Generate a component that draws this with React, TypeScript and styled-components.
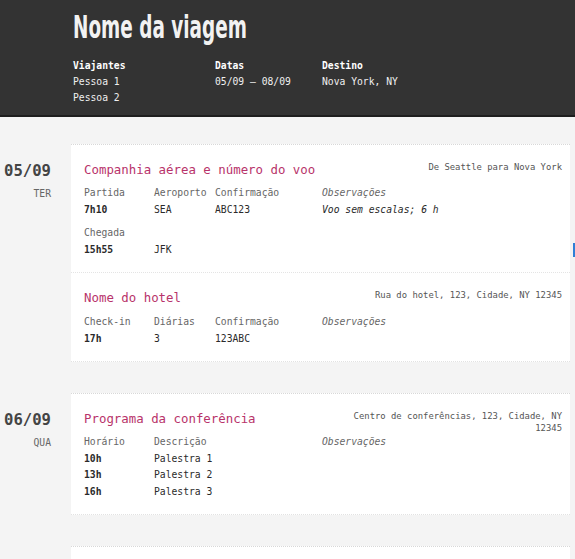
import React from "react";
import styled, { createGlobalStyle } from "styled-components";

const Global = createGlobalStyle`
  html, body { margin: 0; padding: 0; background: #f4f4f4; }
  body { font-family: "DejaVu Sans Mono", monospace; overflow: hidden; }
`;

const mono = `"DejaVu Sans Mono", "Liberation Mono", monospace`;

const Header = styled.header`
  background: #333333;
  border-bottom: 2px solid #1e1e1e;
  padding: 8px 0 13px 73px;
  height: 94px;
  color: #fff;
`;

const Title = styled.h1`
  margin: 0;
  font-family: "DejaVu Sans Condensed", "DejaVu Sans", sans-serif;
  font-weight: 700;
  font-size: 32px;
  line-height: 38px;
  color: #f2f2f2;
  display: inline-block;
  transform: scaleX(0.64);
  transform-origin: left center;
  white-space: nowrap;
`;

const Meta = styled.div`
  display: grid;
  grid-template-columns: 142px 107px auto;
  margin-top: 12px;
`;

const MetaCol = styled.div`
  display: flex;
  flex-direction: column;
  font-family: ${mono};
  font-size: 9.7px;
  line-height: 16px;
`;

const MetaLabel = styled.span`
  font-weight: 700;
  color: #fff;
`;

const MetaValue = styled.span`
  color: #f0f0f0;
`;

const Days = styled.main`
  display: flex;
  flex-direction: column;
  gap: 31px;
  padding-top: 27px;
`;

const Day = styled.section`
  display: grid;
  grid-template-columns: 71px 499px;
`;

const DateCol = styled.div`
  display: flex;
  flex-direction: column;
  align-items: flex-end;
  padding-right: 20px;
  padding-top: 17px;
  font-family: ${mono};
`;

const DateNum = styled.span`
  font-size: 15.6px;
  line-height: 20px;
  font-weight: 700;
  color: #444;
`;

const Weekday = styled.span`
  font-size: 9.7px;
  line-height: 20px;
  margin-top: 3px;
  color: #666;
`;

const Card = styled.div`
  background: #fff;
  border-top: 1px dotted #d8d8d8;
  border-bottom: 1px dotted #e2e2e2;
  display: flex;
  flex-direction: column;
`;

const Item = styled.div`
  padding: 16px 8px 14px 13px;
  & + & {
    border-top: 1px dotted #e4e4e4;
  }
`;

const ItemHead = styled.div`
  display: flex;
  justify-content: space-between;
  align-items: flex-start;
  gap: 12px;
`;

const ItemTitle = styled.h2`
  margin: 0;
  font-family: ${mono};
  font-weight: 400;
  font-size: 12.4px;
  line-height: 18px;
  color: #b8336a;
`;

const Address = styled.div`
  font-family: ${mono};
  font-size: 8.9px;
  line-height: 12px;
  color: #555;
  text-align: right;
  max-width: 215px;
`;

const Grid = styled.div<{ $gap?: number }>`
  display: grid;
  grid-template-columns: 70px 61px 107px 1fr;
  margin-top: ${(p) => p.$gap ?? 6}px;
  font-family: ${mono};
  font-size: 9.7px;
  line-height: 16.5px;
`;

const Label = styled.span<{ $note?: boolean }>`
  color: #666;
  font-style: ${(p) => (p.$note ? "italic" : "normal")};
`;

const Value = styled.span<{ $strong?: boolean; $note?: boolean }>`
  color: #2a2a2a;
  font-weight: ${(p) => (p.$strong ? 700 : 400)};
  font-style: ${(p) => (p.$note ? "italic" : "normal")};
`;

const Blank = styled.span``;

const ScrollMark = styled.div`
  position: fixed;
  right: 0;
  top: 243px;
  width: 2px;
  height: 14px;
  background: #2f7fd6;
`;

export default function App() {
  return (
    <>
      <Global />
      <Header>
        <Title>Nome da viagem</Title>
        <Meta>
          <MetaCol>
            <MetaLabel>Viajantes</MetaLabel>
            <MetaValue>Pessoa 1</MetaValue>
            <MetaValue>Pessoa 2</MetaValue>
          </MetaCol>
          <MetaCol>
            <MetaLabel>Datas</MetaLabel>
            <MetaValue>05/09 – 08/09</MetaValue>
          </MetaCol>
          <MetaCol>
            <MetaLabel>Destino</MetaLabel>
            <MetaValue>Nova York, NY</MetaValue>
          </MetaCol>
        </Meta>
      </Header>
      <Days>
        <Day>
          <DateCol>
            <DateNum>05/09</DateNum>
            <Weekday>TER</Weekday>
          </DateCol>
          <Card>
            <Item>
              <ItemHead>
                <ItemTitle>Companhia aérea e número do voo</ItemTitle>
                <Address>De Seattle para Nova York</Address>
              </ItemHead>
              <Grid>
                <Label>Partida</Label>
                <Label>Aeroporto</Label>
                <Label>Confirmação</Label>
                <Label $note>Observações</Label>
                <Value $strong>7h10</Value>
                <Value>SEA</Value>
                <Value>ABC123</Value>
                <Value $note>Voo sem escalas; 6 h</Value>
              </Grid>
              <Grid $gap={7}>
                <Label>Chegada</Label>
                <Blank />
                <Blank />
                <Blank />
                <Value $strong>15h55</Value>
                <Value>JFK</Value>
                <Blank />
                <Blank />
              </Grid>
            </Item>
            <Item>
              <ItemHead>
                <ItemTitle>Nome do hotel</ItemTitle>
                <Address>Rua do hotel, 123, Cidade, NY 12345</Address>
              </ItemHead>
              <Grid $gap={7}>
                <Label>Check-in</Label>
                <Label>Diárias</Label>
                <Label>Confirmação</Label>
                <Label $note>Observações</Label>
                <Value $strong>17h</Value>
                <Value>3</Value>
                <Value>123ABC</Value>
                <Blank />
              </Grid>
            </Item>
          </Card>
        </Day>
        <Day>
          <DateCol>
            <DateNum>06/09</DateNum>
            <Weekday>QUA</Weekday>
          </DateCol>
          <Card>
            <Item>
              <ItemHead>
                <ItemTitle>Programa da conferência</ItemTitle>
                <Address>Centro de conferências, 123, Cidade, NY 12345</Address>
              </ItemHead>
              <Grid $gap={0}>
                <Label>Horário</Label>
                <Label>Descrição</Label>
                <Blank />
                <Label $note>Observações</Label>
                <Value $strong>10h</Value>
                <Value>Palestra 1</Value>
                <Blank />
                <Blank />
                <Value $strong>13h</Value>
                <Value>Palestra 2</Value>
                <Blank />
                <Blank />
                <Value $strong>16h</Value>
                <Value>Palestra 3</Value>
                <Blank />
                <Blank />
              </Grid>
            </Item>
          </Card>
        </Day>
        <Day>
          <div />
          <Card>
            <Item>
              <ItemHead>
                <ItemTitle>&nbsp;</ItemTitle>
              </ItemHead>
            </Item>
          </Card>
        </Day>
      </Days>
      <ScrollMark />
    </>
  );
}
